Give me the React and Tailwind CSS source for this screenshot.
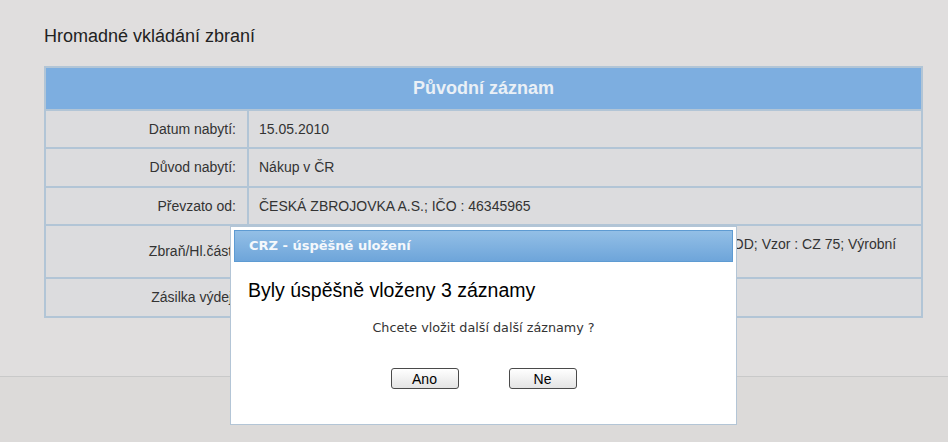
import React from "react";

const rows = [
  { label: "Datum nabytí:", value: "15.05.2010", h: "h-[38px]" },
  { label: "Důvod nabytí:", value: "Nákup v ČR", h: "h-[39px]" },
  { label: "Převzato od:", value: "ČESKÁ ZBROJOVKA A.S.; IČO : 46345965", h: "h-[38px]" },
  {
    label: "Zbraň/Hl.část:",
    value: "Kategorie : B-1; Pistole; Výrobce : ČESKÁ ZBROJOVKA A.S. UHERSKÝ BROD; Vzor : CZ 75; Výrobní",
    extra: "číslo : A 123456; Ráže : 9 mm Luger",
    h: "h-[53px]",
    top: true,
  },
  { label: "Zásilka výdej:", value: "", h: "h-[39px]" },
];

function Dialog() {
  return (
    <div className="absolute left-[230px] top-[226px] w-[507px] h-[199px] bg-white border border-[#b3c5d6] p-[3px] flex flex-col">
      <div className="h-[32px] border border-[#5e9bd2] bg-gradient-to-b from-[#93bfe6] to-[#6ea5da] flex items-center pl-[14px]">
        <span className="font-['DejaVu_Sans',sans-serif] text-[13px] font-bold text-[#f4f8fc]">
          CRZ - úspěšné uložení
        </span>
      </div>
      <div className="pl-[14px] mt-[16px] font-['Liberation_Sans',Arial,sans-serif] text-[19.5px] leading-[24px] text-black">
        Byly úspěšně vloženy 3 záznamy
      </div>
      <div className="mt-[18px] text-center font-['DejaVu_Sans',sans-serif] text-[12.75px] leading-[16px] text-[#333]">
        Chcete vložit další další záznamy ?
      </div>
      <div className="mt-[32px] flex justify-center gap-[50px]">
        <button className="w-[68px] h-[21px] rounded-[3px] border border-[#4a4a4a] bg-gradient-to-b from-white to-[#e4e4e4] font-['Liberation_Sans',Arial,sans-serif] text-[14px] leading-none text-black">
          Ano
        </button>
        <button className="w-[68px] h-[21px] rounded-[3px] border border-[#4a4a4a] bg-gradient-to-b from-white to-[#e4e4e4] font-['Liberation_Sans',Arial,sans-serif] text-[14px] leading-none text-black">
          Ne
        </button>
      </div>
    </div>
  );
}

export default function App() {
  return (
    <div className="relative w-[948px] h-[442px] overflow-hidden bg-[#e0dede] font-['Liberation_Sans',Arial,sans-serif]">
      <div className="h-[376px] pl-[44px] pt-[25px]">
        <h1 className="text-[18px] leading-[22px] text-[#222]">Hromadné vkládání zbraní</h1>
        <table className="mt-[19px] w-[879px] border-collapse border-2 border-[#b2c5d6] text-[14px] text-[#333]">
          <thead>
            <tr className="h-[43px] bg-[#7daee0]">
              <th colSpan={2} className="border-2 border-[#b2c5d6] text-[18px] font-bold text-[#eaf0f6] text-center">
                Původní záznam
              </th>
            </tr>
          </thead>
          <tbody>
            {rows.map((r) => (
              <tr key={r.label} className={`${r.h} bg-[#dcdcde]`}>
                <td className="w-[203px] border-2 border-[#b2c5d6] text-right pr-[11px] align-middle">
                  {r.label}
                </td>
                <td
                  className={`border-2 border-[#b2c5d6] pl-[10px] whitespace-nowrap ${r.top ? "align-top pt-[10px] leading-[17px]" : "align-middle"}`}
                >
                  {r.value}
                  {r.extra && (
                    <>
                      <br />
                      {r.extra}
                    </>
                  )}
                </td>
              </tr>
            ))}
          </tbody>
        </table>
      </div>
      <div className="h-[66px] border-t border-[#c9c9c9] bg-[#dcdad9]"></div>
      <Dialog />
    </div>
  );
}
